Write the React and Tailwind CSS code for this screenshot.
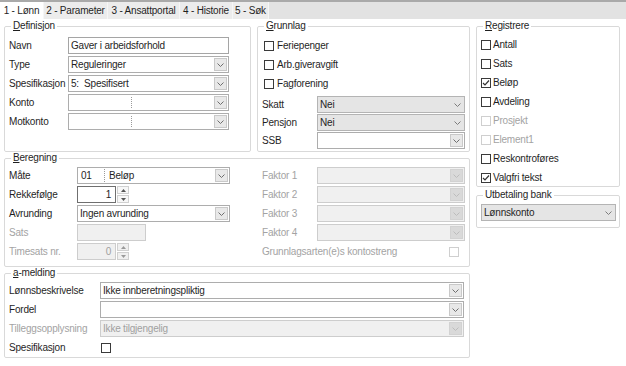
import clsx from 'clsx'

function Chevron({ className }) {
  return (
    <svg width="7" height="4" viewBox="0 0 7 4" className={className}>
      <polyline points="0.5,0.5 3.5,3.5 6.5,0.5" fill="none" stroke="currentColor" strokeWidth="1" />
    </svg>
  )
}

function Group({ title, mark = true, className, children }) {
  return (
    <fieldset className={clsx('min-w-0 rounded-[2px] border border-[#d9d9d9]', className)}>
      <legend className="ml-[2px] px-[2px] leading-[12px]">
        {mark ? (
          <>
            <span className="underline underline-offset-1">{title[0]}</span>
            {title.slice(1)}
          </>
        ) : (
          title
        )}
      </legend>
      {children}
    </fieldset>
  )
}

function Select({ value, tone = 'white', className, children }) {
  return (
    <div
      className={clsx(
        'flex h-[17px] items-stretch border',
        tone === 'white' && 'border-[#adadad] bg-white',
        tone === 'gray' && 'border-[#b4b4b4] bg-[#e5e5e5]',
        tone === 'disabled' && 'border-[#cdcdcd] bg-[#f0f0f0] text-[#a0a0a0]',
        className
      )}
    >
      <div className="flex min-w-0 flex-1 items-center pl-[2px] whitespace-pre">{children ?? value}</div>
      {tone === 'gray' ? (
        <div className="flex w-[14px] items-center justify-center text-[#7c7c7c]">
          <Chevron />
        </div>
      ) : (
        <div
          className={clsx(
            'my-px mr-px flex w-[13px] items-center justify-center border',
            tone === 'white' ? 'border-[#c9c9c9] bg-[#e8e8e8] text-[#6e6e6e]' : 'border-[#d2d2d2] bg-[#d9d9d9] text-[#bcbcbc]'
          )}
        >
          <Chevron />
        </div>
      )}
    </div>
  )
}

function Input({ value, className }) {
  return (
    <div className={clsx('flex h-[17px] items-center border border-[#a5a5a5] bg-white pl-[2px]', className)}>{value}</div>
  )
}

function Spin({ value, disabled }) {
  return (
    <div className="flex h-[17px]">
      <div
        className={clsx(
          'flex w-[39px] items-center justify-end border pr-[4px]',
          disabled ? 'border-[#cdcdcd] bg-[#f0f0f0] text-[#a0a0a0]' : 'border-[#6f6f6f] bg-white'
        )}
      >
        {value}
      </div>
      <div className="ml-px flex w-[12px] flex-col gap-px">
        {['up', 'down'].map((d) => (
          <div
            key={d}
            className={clsx(
              'flex flex-1 items-center justify-center border border-[#d0d0d0]',
              disabled ? 'bg-[#f0f0f0] text-[#9a9a9a]' : 'bg-[#f7f7f7] text-[#555555]'
            )}
          >
            <svg width="5" height="3" viewBox="0 0 5 3">
              <polygon points={d === 'up' ? '2.5,0 5,3 0,3' : '0,0 5,0 2.5,3'} fill="currentColor" />
            </svg>
          </div>
        ))}
      </div>
    </div>
  )
}

function Check({ checked, disabled }) {
  return (
    <span
      className={clsx(
        'flex h-[10px] w-[10px] shrink-0 items-center justify-center border bg-white',
        disabled ? 'border-[#cfcfcf]' : 'border-[#3a3a3a]'
      )}
    >
      {checked && (
        <svg width="8" height="8" viewBox="0 0 8 8">
          <polyline points="1,4 3,6 7,1.5" fill="none" stroke="#333333" strokeWidth="1.2" />
        </svg>
      )}
    </span>
  )
}

function Field({ label, labelW, disabled, children }) {
  return (
    <div className="flex h-[17px] items-center">
      <span className={clsx('shrink-0 whitespace-nowrap', labelW, disabled && 'text-[#a3a3a3]')}>{label}</span>
      {children}
    </div>
  )
}

const tabs = [
  { label: '1 - Lønn', w: 'w-[44px]', active: true },
  { label: '2 - Parameter', w: 'w-[64px]' },
  { label: '3 - Ansattportal', w: 'w-[72px]' },
  { label: '4 - Historie', w: 'w-[53px]' },
  { label: '5 - Søk', w: 'w-[36px]' },
]

const registrere = [
  { label: 'Antall' },
  { label: 'Sats' },
  { label: 'Beløp', checked: true },
  { label: 'Avdeling' },
  { label: 'Prosjekt', disabled: true },
  { label: 'Element1', disabled: true },
  { label: 'Reskontroføres' },
  { label: 'Valgfri tekst', checked: true },
]

export default function App() {
  return (
    <div className="h-[366px] w-[626px] overflow-hidden bg-white font-['Liberation_Sans',Arial,sans-serif] text-[10px] tracking-[-0.2px] text-[#1f1f1f]">
      {/* Tabs */}
      <div className="flex h-[19px] border-t-2 border-[#a9a9a9] bg-[#e2e2e2]">
        {tabs.map((t) => (
          <div
            key={t.label}
            className={clsx(
              'flex items-center justify-center border-r border-[#f6f6f6] whitespace-nowrap',
              t.w,
              t.active ? 'bg-white' : 'bg-[#ececec]'
            )}
          >
            {t.label}
          </div>
        ))}
      </div>

      <div className="flex gap-[6px] pt-px pl-[4px]">
        {/* Left column */}
        <div className="flex w-[466px] flex-col">
          <div className="flex gap-[6px]">
            <Group title="Definisjon" className="h-[132px] w-[247px] px-[4px] pt-[5px]">
              <div className="flex flex-col gap-[2px]">
                <Field label="Navn" labelW="w-[59px]">
                  <Input value="Gaver i arbeidsforhold" className="w-[161px]" />
                </Field>
                <Field label="Type" labelW="w-[59px]">
                  <Select value="Reguleringer" className="w-[161px]" />
                </Field>
                <Field label="Spesifikasjon" labelW="w-[59px]">
                  <Select value="5:  Spesifisert" className="w-[161px]" />
                </Field>
                <Field label="Konto" labelW="w-[59px]">
                  <Select className="w-[161px]">
                    <span className="ml-[60px] h-[11px] border-l border-dotted border-[#9a9a9a]" />
                  </Select>
                </Field>
                <Field label="Motkonto" labelW="w-[59px]">
                  <Select className="w-[161px]">
                    <span className="ml-[60px] h-[11px] border-l border-dotted border-[#9a9a9a]" />
                  </Select>
                </Field>
              </div>
            </Group>

            <Group title="Grunnlag" className="h-[132px] w-[213px] pt-[4px] pl-[4px]">
              <div className="flex flex-col">
                {['Feriepenger', 'Arb.giveravgift', 'Fagforening'].map((l) => (
                  <div key={l} className="flex h-[19px] items-center gap-[3px] pl-[2px]">
                    <Check />
                    <span>{l}</span>
                  </div>
                ))}
              </div>
              <div className="mt-[3px] flex flex-col gap-px">
                <Field label="Skatt" labelW="w-[55px]">
                  <Select value="Nei" tone="gray" className="w-[148px]" />
                </Field>
                <Field label="Pensjon" labelW="w-[55px]">
                  <Select value="Nei" tone="gray" className="w-[148px]" />
                </Field>
                <Field label="SSB" labelW="w-[55px]">
                  <Select className="w-[148px]" />
                </Field>
              </div>
            </Group>
          </div>

          <Group title="Beregning" className="h-[115px] w-[466px] pt-[3px] pl-[4px]">
            <div className="flex">
              <div className="flex w-[253px] flex-col gap-[2px]">
                <Field label="Måte" labelW="w-[68px]">
                  <Select className="w-[153px]">
                    <span className="w-[24px] pl-px">01</span>
                    <span className="h-[13px] border-l border-dotted border-[#9a9a9a]" />
                    <span className="pl-[4px]">Beløp</span>
                  </Select>
                </Field>
                <Field label="Rekkefølge" labelW="w-[68px]">
                  <Spin value="1" />
                </Field>
                <Field label="Avrunding" labelW="w-[68px]">
                  <Select value="Ingen avrunding" className="w-[153px]" />
                </Field>
                <Field label="Sats" labelW="w-[68px]" disabled>
                  <div className="h-[17px] w-[69px] border border-[#cdcdcd] bg-[#f0f0f0]" />
                </Field>
                <Field label="Timesats nr." labelW="w-[68px]" disabled>
                  <Spin value="0" disabled />
                </Field>
              </div>
              <div className="flex w-[203px] flex-col gap-[2px]">
                {['Faktor 1', 'Faktor 2', 'Faktor 3', 'Faktor 4'].map((f) => (
                  <Field key={f} label={f} labelW="w-[55px]" disabled>
                    <Select tone="disabled" className="w-[148px]" />
                  </Field>
                ))}
                <div className="flex h-[17px] items-center justify-between pr-[6px] text-[#a3a3a3]">
                  <span>Grunnlagsarten(e)s kontostreng</span>
                  <Check disabled />
                </div>
              </div>
            </div>
          </Group>

          <Group title="a-melding" className="h-[91px] w-[466px] pt-[3px] pl-[4px]">
            <div className="flex flex-col gap-[2px]">
              <Field label="Lønnsbeskrivelse" labelW="w-[91px]">
                <Select value="Ikke innberetningspliktig" className="w-[364px]" />
              </Field>
              <Field label="Fordel" labelW="w-[91px]">
                <Select className="w-[364px]" />
              </Field>
              <Field label="Tilleggsopplysning" labelW="w-[91px]" disabled>
                <Select value="Ikke tilgjengelig" tone="disabled" className="w-[364px]" />
              </Field>
              <Field label="Spesifikasjon" labelW="w-[92px]">
                <Check />
              </Field>
            </div>
          </Group>
        </div>

        {/* Right column */}
        <div className="flex w-[144px] flex-col gap-[2px]">
          <Group title="Registrere" className="h-[167px] pt-[3px] pl-[4px]">
            {registrere.map((r) => (
              <div key={r.label} className="flex h-[19px] items-center gap-[2px]">
                <Check checked={r.checked} disabled={r.disabled} />
                <span className={clsx(r.disabled && 'text-[#a3a3a3]')}>{r.label}</span>
              </div>
            ))}
          </Group>
          <Group title="Utbetaling bank" mark={false} className="h-[39px] px-[4px] pt-[3px]">
            <Select value="Lønnskonto" tone="gray" className="w-[135px]" />
          </Group>
        </div>
      </div>
    </div>
  )
}
